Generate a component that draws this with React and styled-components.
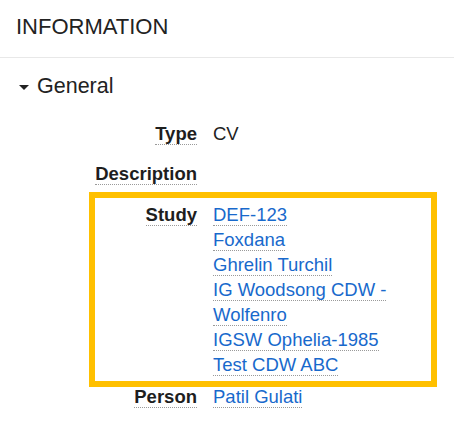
import React from "react";
import styled, { createGlobalStyle } from "styled-components";

const Global = createGlobalStyle`
  html, body { margin: 0; padding: 0; background: #fff; }
  body { font-family: "Liberation Sans", Arial, sans-serif; color: #222; }
`;

const Panel = styled.div`
  width: 454px;
`;

const Header = styled.div`
  height: 42px;
  padding: 15px 16px 0;
  font-size: 22px;
  line-height: 24px;
  color: #222;
  border-bottom: 1px solid #e8e8e8;
`;

const SectionTitle = styled.div`
  display: flex;
  align-items: center;
  margin-top: 16px;
  padding-left: 19px;
  font-size: 21.5px;
  line-height: 24px;
  color: #222;
`;

const Caret = styled.span`
  width: 0;
  height: 0;
  border-left: 5px solid transparent;
  border-right: 5px solid transparent;
  border-top: 5px solid #222;
  margin-right: 8px;
  margin-top: 2px;
`;

const Fields = styled.div`
  display: flex;
  flex-direction: column;
  padding: 0 27px 0 99px;
`;

const Row = styled.div`
  display: grid;
  grid-template-columns: 98px 1fr;
  column-gap: 16px;
  margin-top: ${(p) => p.$gap}px;
  font-size: 18.5px;
  line-height: 25px;
  ${(p) => p.$highlight && `outline: 6px solid #FFC000; outline-offset: 4px;`}
`;

const Label = styled.div`
  text-align: right;
  font-weight: bold;
  color: #1e1e1e;
  white-space: nowrap;
  direction: rtl;
`;

const Dotted = styled.span`
  border-bottom: 1px dotted #9a9a9a;
  direction: ltr;
  unicode-bidi: embed;
`;

const Values = styled.div`
  display: flex;
  flex-direction: column;
`;

const Plain = styled.div`
  color: #222;
`;

const LinkLine = styled.div``;

const Link = styled.a`
  color: #1869cc;
  text-decoration: none;
  border-bottom: 1px dotted #9a9a9a;
  cursor: pointer;
`;

const studies = [
  "DEF-123",
  "Foxdana",
  "Ghrelin Turchil",
  "IG Woodsong CDW - Wolfenro",
  "IGSW Ophelia-1985",
  "Test CDW ABC",
];

export default function App() {
  return (
    <>
      <Global />
      <Panel>
        <Header>INFORMATION</Header>
        <SectionTitle>
          <Caret />
          General
        </SectionTitle>
        <Fields>
          <Row $gap={23}>
            <Label><Dotted>Type</Dotted></Label>
            <Plain>CV</Plain>
          </Row>
          <Row $gap={15}>
            <Label><Dotted>Description</Dotted></Label>
            <Plain />
          </Row>
          <Row $gap={16} $highlight>
            <Label><Dotted>Study</Dotted></Label>
            <Values>
              {studies.map((s) => (
                <LinkLine key={s}>
                  <Link>{s}</Link>
                </LinkLine>
              ))}
            </Values>
          </Row>
          <Row $gap={7}>
            <Label><Dotted>Person</Dotted></Label>
            <Values>
              <LinkLine>
                <Link>Patil Gulati</Link>
              </LinkLine>
            </Values>
          </Row>
        </Fields>
      </Panel>
    </>
  );
}
